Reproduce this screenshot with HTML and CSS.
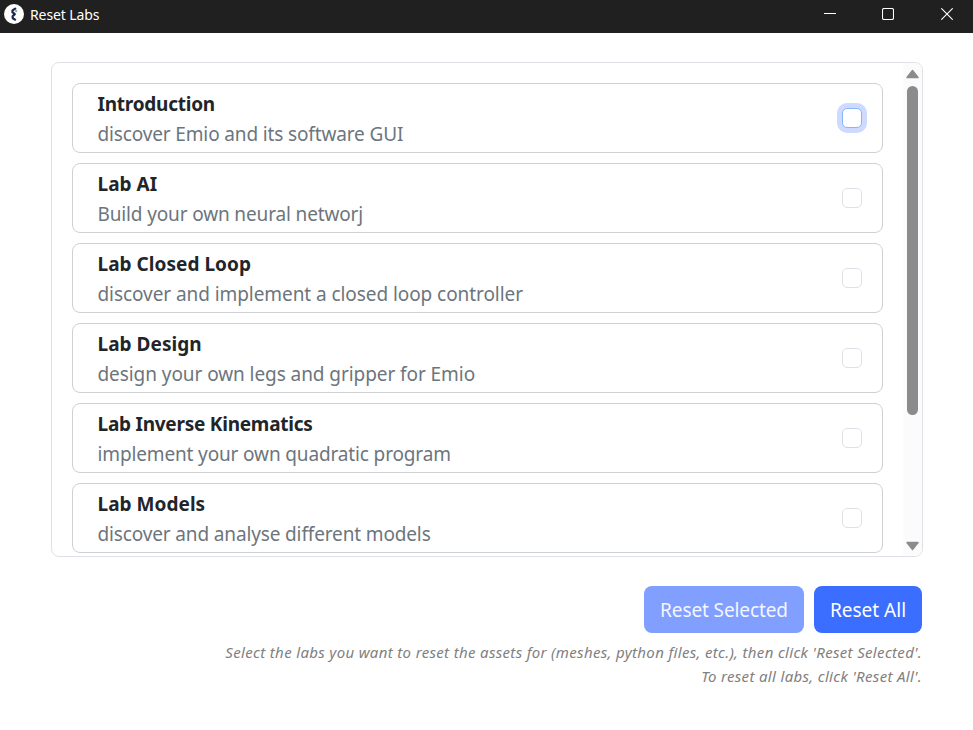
FILE: index.html
```html
<!DOCTYPE html>
<html lang="en">
<head>
<meta charset="utf-8">
<title>Reset Labs</title>
<link rel="stylesheet" href="styles.css">
</head>
<body>
<header class="titlebar">
  <svg class="logo" width="20" height="20" viewBox="0 0 20 20"><circle cx="10" cy="10" r="10" fill="#fff"/><path d="M11.2 4.6L8.6 6.4l-.2 1.8 2.4 1.9-2.2 2.2.2 1.9 2.2 1.4" fill="none" stroke="#1c2a50" stroke-width="2.3" stroke-linejoin="round" stroke-linecap="round"/><circle cx="12.2" cy="7" r="1.2" fill="#7fb5ad"/></svg>
  <span class="title">Reset Labs</span>
  <div class="controls">
    <svg class="minimize" width="12" height="12" viewBox="0 0 12 12"><path d="M0 5.5h12" stroke="#fff"/></svg>
    <svg width="12" height="12" viewBox="0 0 12 12"><rect x=".5" y=".5" width="11" height="11" rx="1.5" fill="none" stroke="#fff" stroke-width="1.1"/></svg>
    <svg width="12" height="12" viewBox="0 0 12 12"><path d="M.3.3l11.4 11.4M11.7.3L.3 11.7" stroke="#fff" stroke-width="1.1"/></svg>
  </div>
</header>
<main class="page">
  <div class="panel">
    <div class="list">
      <label class="lab"><span class="text"><b class="name">Introduction</b><span class="desc">discover Emio and its software GUI</span></span><input class="check focused" type="checkbox"></label>
      <label class="lab"><span class="text"><b class="name loose">Lab AI</b><span class="desc">Build your own neural networj</span></span><input class="check" type="checkbox"></label>
      <label class="lab"><span class="text"><b class="name loose">Lab Closed Loop</b><span class="desc open">discover and implement a closed loop controller</span></span><input class="check" type="checkbox"></label>
      <label class="lab"><span class="text"><b class="name loose">Lab Design</b><span class="desc open">design your own legs and gripper for Emio</span></span><input class="check" type="checkbox"></label>
      <label class="lab"><span class="text"><b class="name">Lab Inverse Kinematics</b><span class="desc">implement your own quadratic program</span></span><input class="check" type="checkbox"></label>
      <label class="lab"><span class="text"><b class="name loose">Lab Models</b><span class="desc">discover and analyse different models</span></span><input class="check" type="checkbox"></label>
    </div>
    <div class="scrollbar">
      <svg width="13" height="10" viewBox="0 0 13 10"><path d="M6.5 1.5L12 8.5H1z" fill="#8b8b8b" stroke="#8b8b8b" stroke-width="1.5" stroke-linejoin="round"/></svg>
      <div class="thumb"></div>
      <svg class="down" width="13" height="10" viewBox="0 0 13 10"><path d="M6.5 8.5L12 1.5H1z" fill="#8b8b8b" stroke="#8b8b8b" stroke-width="1.5" stroke-linejoin="round"/></svg>
    </div>
  </div>
  <div class="actions">
    <button class="btn selected" disabled>Reset Selected</button>
    <button class="btn all">Reset All</button>
  </div>
  <p class="hint"><span>Select the labs you want to reset the assets for (meshes, python files, etc.), then click 'Reset Selected'.</span><span>To reset all labs, click 'Reset All'.</span></p>
</main>
</body>
</html>
```
FILE: styles.css
```css
* { box-sizing: border-box; }
body {
  margin: 0;
  height: 730px;
  overflow: hidden;
  background: #fff;
  color: #212529;
  font: 19px/30px "Noto Sans", "Open Sans", sans-serif;
}
.titlebar {
  display: flex;
  height: 33px;
  padding: 4px 20px 0 4px;
  background: #202020;
  color: #fff;
}
.logo { flex: none; }
.title { margin-left: 6px; font-size: 14px; line-height: 21px; letter-spacing: -0.1px; }
.controls { display: flex; gap: 47px; margin: 4px 0 0 auto; }
.controls svg { display: block; }
.controls .minimize { margin-right: -1px; }
.page { padding: 29px 51px 0; }
.panel {
  display: flex;
  width: 872px;
  height: 495px;
  border: 1px solid #dee2e6;
  border-radius: 8px;
  overflow: hidden;
}
.list { flex: 1; display: flex; flex-direction: column; gap: 10px; padding: 20px 20px 0; }
.lab {
  display: flex;
  flex: none;
  align-items: center;
  justify-content: space-between;
  height: 70px;
  padding: 0 20px 0 24.5px;
  border: 1px solid #ced0d2;
  border-radius: 8px;
}
.text { display: flex; flex-direction: column; margin-top: 2px; }
.name { font-weight: 700; letter-spacing: -0.24px; }
.loose { letter-spacing: 0.04px; }
.desc { color: #6c757d; letter-spacing: -0.14px; }
.open { letter-spacing: -0.07px; }
.check {
  appearance: none;
  width: 20px;
  height: 20px;
  margin: 0;
  border: 1px solid #dee2e6;
  border-radius: 5px;
  background: #fff;
}
.focused { border-color: #86b7fe; box-shadow: 0 0 0 5px #cedaff; }
.scrollbar {
  display: flex;
  flex-direction: column;
  align-items: center;
  width: 19px;
  padding: 6px 0 5px;
  background: #fbfbfc;
}
.thumb { width: 11px; height: 329px; margin-top: 7px; border-radius: 6px; background: #8b8b8b; }
.down { margin-top: auto; }
.actions { display: flex; justify-content: flex-end; gap: 10px; margin-top: 29px; }
.btn {
  height: 47px;
  padding: 0;
  border: 0;
  border-radius: 8px;
  color: #fff;
  background: #3b6eff;
  font: inherit;
}
.selected { width: 160px; background: #819fff; color: #f4f6ff; letter-spacing: -0.1px; }
.all { width: 108px; }
.hint {
  display: flex;
  flex-direction: column;
  align-items: flex-end;
  margin: 7px 0 0;
  color: #808080;
  font-size: 15px;
  font-style: italic;
  letter-spacing: 0.335px;
  line-height: 24px;
  white-space: nowrap;
}
```
